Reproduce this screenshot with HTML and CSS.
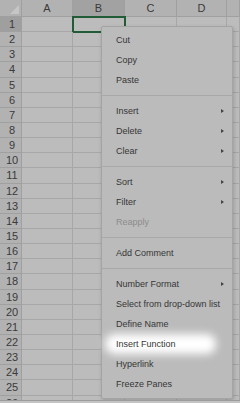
FILE: index.html
```html
<!DOCTYPE html>
<html lang="en">
<head>
  <meta charset="UTF-8" />
  <meta name="viewport" content="width=device-width, initial-scale=1" />
  <title>Sheet context menu</title>
  <link rel="stylesheet" href="styles.css">
</head>
<body>

  <div class="sheet">
    <div class="grid">
      <div class="hd corner"><span class="tri"></span></div>
      <div class="hd">A</div>
      <div class="hd sel">B</div>
      <div class="hd">C</div>
      <div class="hd">D</div>
      <div class="hd"></div>

      <div class="rh sel">1</div><div></div><div class="active"></div><div></div><div></div><div></div>
      <div class="rh">2</div><div></div><div></div><div></div><div></div><div></div>
      <div class="rh">3</div><div></div><div></div><div></div><div></div><div></div>
      <div class="rh">4</div><div></div><div></div><div></div><div></div><div></div>
      <div class="rh">5</div><div></div><div></div><div></div><div></div><div></div>
      <div class="rh">6</div><div></div><div></div><div></div><div></div><div></div>
      <div class="rh">7</div><div></div><div></div><div></div><div></div><div></div>
      <div class="rh">8</div><div></div><div></div><div></div><div></div><div></div>
      <div class="rh">9</div><div></div><div></div><div></div><div></div><div></div>
      <div class="rh">10</div><div></div><div></div><div></div><div></div><div></div>
      <div class="rh">11</div><div></div><div></div><div></div><div></div><div></div>
      <div class="rh">12</div><div></div><div></div><div></div><div></div><div></div>
      <div class="rh">13</div><div></div><div></div><div></div><div></div><div></div>
      <div class="rh">14</div><div></div><div></div><div></div><div></div><div></div>
      <div class="rh">15</div><div></div><div></div><div></div><div></div><div></div>
      <div class="rh">16</div><div></div><div></div><div></div><div></div><div></div>
      <div class="rh">17</div><div></div><div></div><div></div><div></div><div></div>
      <div class="rh">18</div><div></div><div></div><div></div><div></div><div></div>
      <div class="rh">19</div><div></div><div></div><div></div><div></div><div></div>
      <div class="rh">20</div><div></div><div></div><div></div><div></div><div></div>
      <div class="rh">21</div><div></div><div></div><div></div><div></div><div></div>
      <div class="rh">22</div><div></div><div></div><div></div><div></div><div></div>
      <div class="rh">23</div><div></div><div></div><div></div><div></div><div></div>
      <div class="rh">24</div><div></div><div></div><div></div><div></div><div></div>
      <div class="rh">25</div><div></div><div></div><div></div><div></div><div></div>
      <div class="rh">26</div><div></div><div></div><div></div><div></div><div></div>
    </div>

    <div class="menu">
      <div class="item">Cut</div>
      <div class="item">Copy</div>
      <div class="item">Paste</div>
      <div class="sep"></div>
      <div class="item sub">Insert</div>
      <div class="item sub">Delete</div>
      <div class="item sub">Clear</div>
      <div class="sep"></div>
      <div class="item sub">Sort</div>
      <div class="item sub">Filter</div>
      <div class="item disabled">Reapply</div>
      <div class="sep"></div>
      <div class="item">Add Comment</div>
      <div class="sep"></div>
      <div class="item sub">Number Format</div>
      <div class="item">Select from drop-down list</div>
      <div class="item">Define Name</div>
      <div class="item spot"><span>Insert Function</span></div>
      <div class="item">Hyperlink</div>
      <div class="item">Freeze Panes</div>
    </div>
  </div>

  <div class="footer"></div>

</body>
</html>
```

FILE: styles.css
```css
body {
  margin: 0;
  background: #b9b9b9;
  font-family: "Liberation Sans", Arial, sans-serif;
}

.sheet {
  position: relative;
  height: 400px;
  overflow: hidden;
}

.grid {
  display: grid;
  grid-template-columns: 22px 51px 52px 52px 50px 1fr;
  grid-template-rows: 17px;
  grid-auto-rows: 15.15px;
  background: #bcbcbc;
}

.grid > div {
  box-sizing: border-box;
  border-right: 1px solid #a7a7a7;
  border-bottom: 1px solid #a7a7a7;
}

.hd {
  background: #b2b2b2;
  color: #3a3a3a;
  font-size: 11px;
  line-height: 17px;
  text-align: center;
}

.grid > .hd {
  border-color: #a0a0a0;
}

.hd.sel {
  background: #a2a2a2;
}

.corner {
  position: relative;
}

.tri {
  position: absolute;
  right: 2px;
  bottom: 2px;
  width: 0;
  height: 0;
  border-left: 9px solid transparent;
  border-bottom: 9px solid #c6c6c6;
}

.rh {
  background: #b2b2b2;
  color: #3a3a3a;
  font-size: 11px;
  line-height: 15px;
  text-align: center;
  padding-left: 3px;
}

.grid > .rh {
  border-color: #a0a0a0;
}

.rh.sel {
  background: #9f9f9f;
}

.active {
  outline: 2px solid #215c36;
  outline-offset: -1px;
}

/* context menu */
.menu {
  position: absolute;
  left: 101px;
  top: 26px;
  width: 132px;
  box-sizing: border-box;
  padding: 3px 0 4px;
  background: #bbbbbb;
  border: 1px solid #a4a4a4;
  border-radius: 2px;
  box-shadow: 1px 2px 4px rgba(0,0,0,0.18);
  color: #363636;
  font-size: 9px;
}

.item {
  position: relative;
  height: 20px;
  line-height: 20px;
  padding-left: 14px;
  white-space: nowrap;
}

.item.sub::after {
  content: "";
  position: absolute;
  right: 8px;
  top: 8px;
  border-left: 3px solid #444;
  border-top: 2.5px solid transparent;
  border-bottom: 2.5px solid transparent;
}

.item.disabled {
  color: #8c8c8c;
}

.sep {
  height: 1px;
  margin: 5px 0;
  background: #a9a9a9;
}

.item.spot::before {
  content: "";
  position: absolute;
  left: 3px;
  right: 16px;
  top: 0;
  bottom: 0;
  background: #fff;
  border-radius: 9px;
  filter: blur(4px);
}

.item.spot span {
  position: relative;
}

.footer {
  height: 3px;
  border-top: 1px solid #9c9c9c;
  background: #c4c4c4;
}
```
